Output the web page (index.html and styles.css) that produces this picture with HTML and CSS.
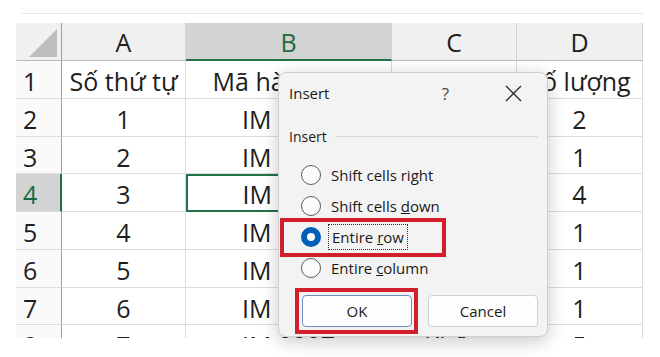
FILE: index.html
```html
<!DOCTYPE html>
<html lang="vi">
<head>
    <meta charset="UTF-8">
    <meta name="viewport" content="width=device-width, initial-scale=1.0">
    <title>Insert - Excel</title>
    <link rel="stylesheet" href="styles.css">
</head>
<body>
    <div class="sheet">
        <div class="ribbon-edge"></div>

        <div class="grid">
            <div class="corner"><span class="corner-tri"></span></div>
            <div class="col-head">A</div>
            <div class="col-head active">B</div>
            <div class="col-head">C</div>
            <div class="col-head">D</div>

            <div class="row-head">1</div>
            <div class="cell">Số thứ tự</div>
            <div class="cell">Mã hàng hóa</div>
            <div class="cell">Tên hàng</div>
            <div class="cell">Số lượng</div>

            <div class="row-head">2</div>
            <div class="cell">1</div>
            <div class="cell">IM 0001</div>
            <div class="cell">Áo</div>
            <div class="cell">2</div>

            <div class="row-head">3</div>
            <div class="cell">2</div>
            <div class="cell">IM 0002</div>
            <div class="cell">Quần</div>
            <div class="cell">1</div>

            <div class="row-head active">4</div>
            <div class="cell">3</div>
            <div class="cell selected">IM 0003</div>
            <div class="cell">Mũ</div>
            <div class="cell">4</div>

            <div class="row-head">5</div>
            <div class="cell">4</div>
            <div class="cell">IM 0004</div>
            <div class="cell">Giày</div>
            <div class="cell">1</div>

            <div class="row-head">6</div>
            <div class="cell">5</div>
            <div class="cell">IM 0005</div>
            <div class="cell">Túi</div>
            <div class="cell">1</div>

            <div class="row-head">7</div>
            <div class="cell">6</div>
            <div class="cell">IM 0006</div>
            <div class="cell">Váy</div>
            <div class="cell">1</div>

            <div class="row-head">8</div>
            <div class="cell">7</div>
            <div class="cell">IM 0007</div>
            <div class="cell">Khăn</div>
            <div class="cell">5</div>
        </div>

        <div class="dialog">
            <div class="dlg-title">
                <span class="dlg-name">Insert</span>
                <span class="dlg-help">?</span>
                <svg class="dlg-close" width="17" height="17" viewBox="0 0 17 17">
                    <path d="M1 1 L16 16 M16 1 L1 16" stroke="#2b2b2b" stroke-width="1.3" fill="none"/>
                </svg>
            </div>

            <div class="dlg-body">
                <div class="group-label"><span>Insert</span><span class="group-line"></span></div>

                <div class="options">
                    <label class="option"><span class="radio"></span><span>Shift cells ri<u>g</u>ht</span></label>
                    <label class="option"><span class="radio"></span><span>Shift cells <u>d</u>own</span></label>
                    <label class="option"><span class="radio checked"></span><span class="focus">Entire <u>r</u>ow</span></label>
                    <label class="option"><span class="radio"></span><span>Entire <u>c</u>olumn</span></label>
                </div>

                <div class="buttons">
                    <button class="btn default">OK</button>
                    <button class="btn">Cancel</button>
                </div>
            </div>

            <!-- khung đỏ đánh dấu -->
            <div class="mark mark-row"></div>
            <div class="mark mark-ok"></div>
        </div>
    </div>
</body>
</html>
```

FILE: styles.css
```css
body {
    margin: 0;
    background: #ffffff;
    font-family: "Open Sans", "Noto Sans", sans-serif;
    color: #1e1e1e;
}
.sheet {
    position: relative;
    width: 660px;
    height: 357px;
    overflow: hidden;
}
.ribbon-edge {
    height: 13px;
    margin: 0 17px 0 22px;
    border-bottom: 1px solid #e6e6e6;
}
.grid {
    display: grid;
    grid-template-columns: 46px 124px 206px 125px 126px;
    grid-template-rows: 38px;
    grid-auto-rows: 37.75px;
    margin: 9px 0 0 16px;
    width: 627px;
    height: 315px;
    overflow: hidden;
    font-size: 25px;
}
.corner, .col-head {
    background: #f0f0f0;
    border-bottom: 1px solid #b9b9b9;
    border-right: 1px solid #d4d4d4;
    box-sizing: border-box;
}
.corner {
    position: relative;
    border-right: 1px solid #9e9e9e;
}
.corner-tri {
    position: absolute;
    right: 4px;
    bottom: 3px;
    width: 0;
    height: 0;
    border-left: 28px solid transparent;
    border-bottom: 28px solid #bdbdbd;
}
.col-head {
    text-align: center;
    padding-top: 3px;
    line-height: 32px;
}
.col-head.active {
    background: #d3d3d3;
    color: #1d6b40;
    border-bottom: 2px solid #217346;
}
.row-head {
    box-sizing: border-box;
    padding: 4px 0 0 7px;
    line-height: 32px;
    border-right: 1px solid #9e9e9e;
    border-bottom: 1px solid #dcdcdc;
    background: #fafafa;
}
.row-head.active {
    background: #d3d3d3;
    color: #1d6b40;
    border-right: 2px solid #217346;
}
.cell {
    box-sizing: border-box;
    padding-top: 4px;
    line-height: 32px;
    text-align: center;
    white-space: nowrap;
    overflow: hidden;
    border-right: 1px solid #dcdcdc;
    border-bottom: 1px solid #dcdcdc;
}
.cell.selected {
    border: 2px solid #217346;
    padding-top: 2px;
}

/* hộp thoại Insert */
.dialog {
    position: absolute;
    left: 278px;
    top: 72px;
    width: 270px;
    height: 265px;
    box-sizing: border-box;
    background: #f3f3f3;
    border: 1px solid #cfcfcf;
    border-radius: 8px;
    box-shadow: 0 4px 18px rgba(0, 0, 0, 0.22);
    font-size: 15px;
    color: #1a1a1a;
}
.dlg-title {
    display: flex;
    align-items: center;
    height: 40px;
    padding-left: 10px;
}
.dlg-name {
    flex: 1;
    font-size: 15px;
}
.dlg-help {
    font-size: 17px;
    color: #4a4a4a;
    margin-right: 56px;
}
.dlg-close {
    margin-right: 25px;
}
.dlg-body {
    padding: 0 9px 0 10px;
}
.group-label {
    display: flex;
    align-items: center;
    margin-top: 13px;
    height: 20px;
    font-size: 14px;
}
.group-line {
    flex: 1;
    margin-left: 8px;
    border-top: 1px solid #d9d9d9;
}
.options {
    margin-top: 13px;
}
.option {
    display: flex;
    align-items: center;
    height: 31px;
    padding-left: 12px;
}
.radio {
    width: 20px;
    height: 20px;
    margin-right: 10px;
    border: 1px solid #5c5c5c;
    border-radius: 50%;
    background: #fbfbfb;
    box-sizing: border-box;
}
.radio.checked {
    border: 6px solid #005fb8;
    background: #ffffff;
}
.focus {
    outline: 1px dotted #333;
    outline-offset: 2px;
    padding: 0 1px;
}
.buttons {
    display: flex;
    gap: 16px;
    margin-top: 12px;
    padding-left: 13px;
}
.btn {
    width: 110px;
    height: 32px;
    background: #fdfdfd;
    border: 1px solid #d1d1d1;
    border-radius: 4px;
    font-family: "Open Sans", "Noto Sans", sans-serif;
    font-size: 15px;
    color: #1a1a1a;
}
.btn.default {
    border: 1px solid #6a8fc7;
}
.mark {
    position: absolute;
    border: 4px solid #d11f2c;
    box-sizing: border-box;
}
.mark-row {
    left: 1px;
    top: 145px;
    width: 166px;
    height: 39px;
}
.mark-ok {
    left: 16px;
    top: 215px;
    width: 123px;
    height: 46px;
}
```
